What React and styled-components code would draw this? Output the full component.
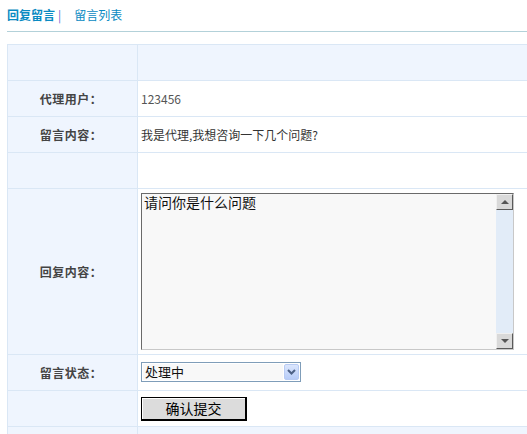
import React from 'react'
import styled, { createGlobalStyle } from 'styled-components'

const GlobalStyle = createGlobalStyle`
  html, body {
    overflow: hidden;
  }
  body {
    margin: 8px 0 0 7px;
    background: #fff;
    font-family: "Noto Sans CJK SC", "Liberation Sans", sans-serif;
    font-size: 12px;
    color: #333;
  }
`;

const NavBar = styled.div`
  display: flex;
  align-items: center;
  height: 14px;
  padding-bottom: 9px;
  border-bottom: 1px solid #b3d1d9;
  width: 560px;
  line-height: 14px;
`;

const NavLink = styled.a`
  color: #0a8ac2;
  font-weight: ${p => (p.$active ? 700 : 400)};
  text-decoration: none;
  cursor: pointer;
`;

const NavSep = styled.span`
  color: #6b6bd4;
  margin: 0 13px 0 3px;
`;

const FormTable = styled.div`
  margin-top: 12px;
  width: 560px;
  border-top: 1px solid #dae7f5;
  border-left: 1px solid #dae7f5;
  display: flex;
  flex-direction: column;
`;

const Row = styled.div`
  display: grid;
  grid-template-columns: 130px 1fr;
  height: ${p => p.$h || 35}px;
  border-bottom: 1px solid #dae7f5;
  background: ${p => (p.$shaded ? '#eff5fe' : '#fff')};
`;

const Label = styled.div`
  display: flex;
  align-items: center;
  justify-content: center;
  padding-right: 3px;
  background: #eff5fe;
  border-right: 1px solid #dae7f5;
  color: #444;
  font-weight: 700;
  font-size: 12px;
  letter-spacing: 0.5px;
`;

const Value = styled.div`
  display: flex;
  align-items: ${p => (p.$top ? 'flex-start' : 'center')};
  padding-left: 3px;
  padding-top: ${p => (p.$top ? 4 : 0)}px;
  color: ${p => p.$color || '#333'};
  font-size: 12px;
`;

const TextBox = styled.div`
  display: flex;
  width: 371px;
  height: 155px;
  border: 1px solid #c8c8c8;
  border-top-color: #6a6a6a;
  border-left-color: #6a6a6a;
  background: #f8f8f8;
`;

const TextArea = styled.textarea`
  flex: 1;
  border: none;
  outline: none;
  resize: none;
  background: transparent;
  padding: 0 2px;
  margin: 0;
  font-family: "Noto Sans CJK SC", sans-serif;
  font-size: 14px;
  line-height: 16px;
  color: #111;
  overflow: hidden;
`;

const ScrollBar = styled.div`
  width: 17px;
  display: flex;
  flex-direction: column;
  background: #e2ecf8;
`;

const ScrollButton = styled.div`
  height: 16px;
  box-sizing: border-box;
  display: flex;
  align-items: center;
  justify-content: center;
  background: #d9d9d9;
  border: 1px solid #f0f0f0;
  border-right-color: #5a5a5a;
  border-bottom-color: #5a5a5a;
`;

const ScrollTrack = styled.div`
  flex: 1;
`;

const Arrow = styled.span`
  width: 0;
  height: 0;
  border-left: 4px solid transparent;
  border-right: 4px solid transparent;
  ${p => (p.$down ? 'border-top: 4px solid #555;' : 'border-bottom: 4px solid #555;')}
`;

const Select = styled.div`
  display: flex;
  width: 158px;
  height: 18px;
  margin-top: -1px;
  border: 1px solid #7f9db9;
  background: #fff;
`;

const SelectText = styled.div`
  flex: 1;
  background: #f8f8f8;
  margin: 1px;
  padding-left: 2px;
  font-size: 13px;
  line-height: 16px;
  color: #111;
`;

const DropButton = styled.div`
  width: 15px;
  margin: 1px 1px 1px 0;
  border-radius: 2px;
  background: linear-gradient(180deg, #dbe6fd 0%, #b7ccf8 100%);
  border: 1px solid #b8cbf3;
  box-sizing: border-box;
  display: flex;
  align-items: center;
  justify-content: center;
`;

const SubmitButton = styled.button`
  width: 106px;
  height: 24px;
  padding: 0;
  background: #dcdcdc;
  border: 1px solid #000;
  border-right-width: 2px;
  border-bottom-width: 2px;
  box-shadow: inset 1px 1px 0 #fff;
  font-family: "Noto Sans CJK SC", sans-serif;
  font-size: 14px;
  color: #000;
  cursor: pointer;
`;

export default function App() {
  return (
    <>
      <GlobalStyle />
      <NavBar>
        <NavLink $active>回复留言</NavLink>
        <NavSep>|</NavSep>
        <NavLink>留言列表</NavLink>
      </NavBar>
      <FormTable>
        <Row $shaded>
          <Label />
          <Value />
        </Row>
        <Row>
          <Label>代理用户：</Label>
          <Value $color="#555">123456</Value>
        </Row>
        <Row>
          <Label>留言内容：</Label>
          <Value>我是代理,我想咨询一下几个问题?</Value>
        </Row>
        <Row>
          <Label />
          <Value />
        </Row>
        <Row $h={165}>
          <Label>回复内容：</Label>
          <Value $top>
            <TextBox>
              <TextArea defaultValue="请问你是什么问题" />
              <ScrollBar>
                <ScrollButton><Arrow /></ScrollButton>
                <ScrollTrack />
                <ScrollButton><Arrow $down /></ScrollButton>
              </ScrollBar>
            </TextBox>
          </Value>
        </Row>
        <Row>
          <Label>留言状态：</Label>
          <Value>
            <Select>
              <SelectText>处理中</SelectText>
              <DropButton>
                <svg width="9" height="6" viewBox="0 0 9 6">
                  <path d="M1 1 L4.5 4.5 L8 1" fill="none" stroke="#4d6185" strokeWidth="2" />
                </svg>
              </DropButton>
            </Select>
          </Value>
        </Row>
        <Row>
          <Label />
          <Value>
            <SubmitButton>确认提交</SubmitButton>
          </Value>
        </Row>
        <Row $shaded>
          <Label />
          <Value />
        </Row>
      </FormTable>
    </>
  )
}
